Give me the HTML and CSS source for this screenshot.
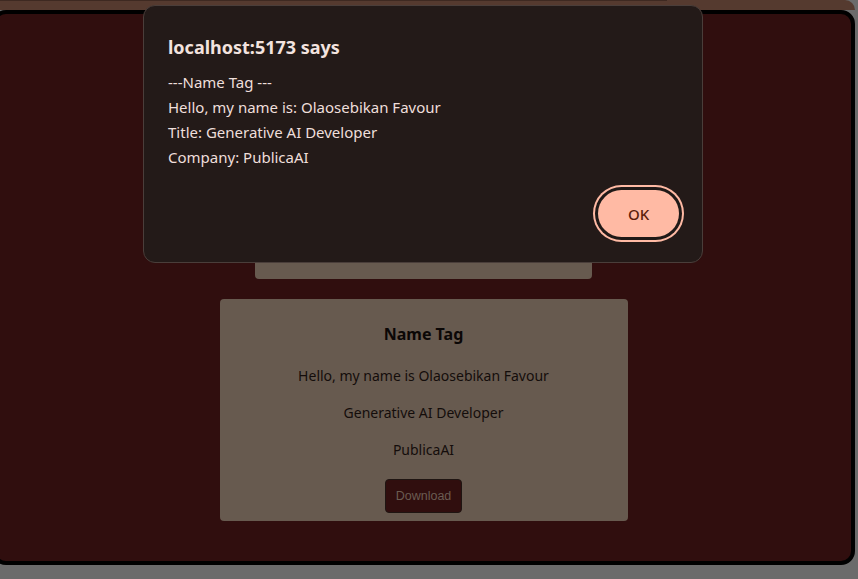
FILE: index.html
```html
<!DOCTYPE html>
<html lang="en">
<head>
<meta charset="utf-8">
<title>Name Tag</title>
<link rel="stylesheet" href="styles.css">
</head>
<body>
<div class="page">
  <div class="band"><div class="band-line"></div></div>
  <main class="frame">
    <section class="card card-top">
      <p class="card-line hidden-line">PublicaAI</p>
    </section>
    <section class="card card-name">
      <h3 class="card-title">Name Tag</h3>
      <p class="card-line first">Hello, my name is Olaosebikan Favour</p>
      <p class="card-line">Generative AI Developer</p>
      <p class="card-line">PublicaAI</p>
      <button class="download">Download</button>
    </section>
  </main>
</div>
<div class="dialog" role="alertdialog">
  <h2 class="dialog-title">localhost:5173 says</h2>
  <div class="dialog-body">
    <div>---Name Tag ---</div>
    <div>Hello, my name is: Olaosebikan Favour</div>
    <div>Title: Generative AI Developer</div>
    <div>Company: PublicaAI</div>
  </div>
  <div class="dialog-actions">
    <button class="ok">OK</button>
  </div>
</div>
</body>
</html>
```

FILE: styles.css
```css
html, body {
  margin: 0;
  padding: 0;
}
body {
  background: #6b6b6b;
  width: 858px;
  height: 579px;
  overflow: hidden;
  font-family: "Noto Sans", "Open Sans", sans-serif;
}
.page {
  width: 855px;
  display: flex;
  flex-direction: column;
}
.band {
  height: 10px;
  background: #553a2f;
  border-radius: 0 10px 0 0;
}
.band-line {
  width: 667px;
  height: 1px;
  background: #3e2921;
}
.frame {
  box-sizing: border-box;
  margin-left: -8px;
  width: 863px;
  height: 555px;
  background: #300e0e;
  border: 4px solid #000;
  border-radius: 14px;
  display: flex;
  flex-direction: column;
  align-items: center;
  gap: 20px;
  padding-top: 45px;
}
.card {
  background: #675a4f;
  border-radius: 4px;
  display: flex;
  flex-direction: column;
  align-items: center;
  box-sizing: border-box;
  color: #140d0b;
}
.card-top {
  width: 337px;
  height: 220px;
  justify-content: flex-end;
  padding-bottom: 16px;
}
.card-name {
  width: 408px;
  height: 222px;
  padding-top: 25px;
}
.card-title {
  margin: 0;
  font-size: 16px;
  line-height: 20px;
  font-weight: 700;
  color: #0b0706;
}
.card-line {
  margin: 17px 0 0;
  font-size: 14px;
  line-height: 20px;
}
.card-line.first {
  margin-top: 22px;
}
.hidden-line {
  margin: 0;
}
.download {
  margin-top: 19px;
  height: 34px;
  width: 77px;
  padding: 0;
  background: #300e0e;
  border: 1px solid #1f1512;
  border-radius: 4px;
  color: #6b5c52;
  font-family: "Liberation Sans", Arial, sans-serif;
  font-size: 12.5px;
}
.dialog {
  position: fixed;
  left: 143px;
  top: 5px;
  width: 560px;
  height: 258px;
  box-sizing: border-box;
  background: #231a18;
  border: 1px solid #4a3e3a;
  border-radius: 12px;
  padding: 29px 23px 0 24px;
  color: #efdfdb;
  display: flex;
  flex-direction: column;
}
.dialog-title {
  margin: 0;
  font-size: 18px;
  line-height: 24px;
  font-weight: 700;
  color: #f3e3df;
}
.dialog-body {
  margin-top: 11px;
  font-size: 15px;
  line-height: 25px;
}
.dialog-actions {
  display: flex;
  justify-content: flex-end;
  margin-top: 20px;
}
.ok {
  width: 81px;
  height: 47px;
  border: none;
  border-radius: 24px;
  background: #ffbaa4;
  color: #5a1d0c;
  font-family: "Noto Sans", "Open Sans", sans-serif;
  font-size: 15px;
  font-weight: 500;
  box-shadow: 0 0 0 3px #1f1917, 0 0 0 5px #ffbaa4;
}
```
